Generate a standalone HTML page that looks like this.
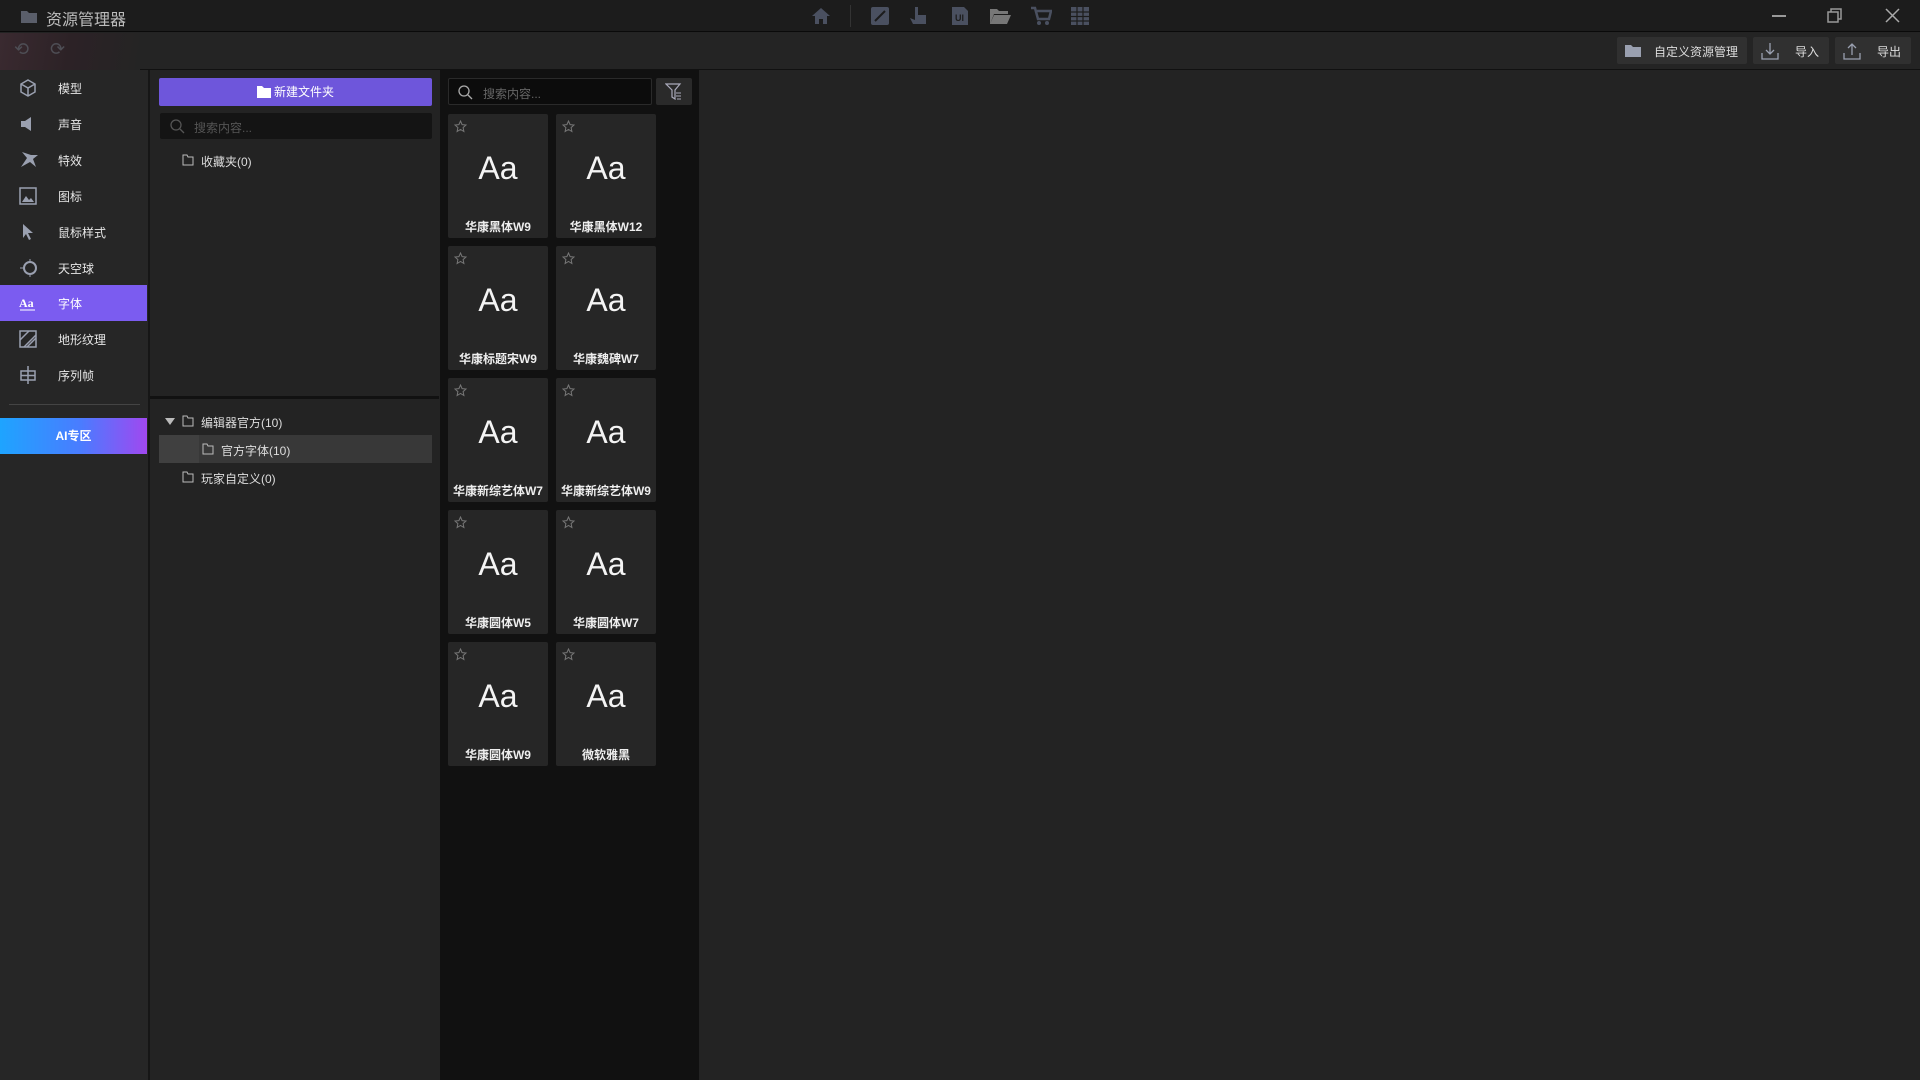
<!DOCTYPE html>
<html><head><meta charset="utf-8"><style>
*{margin:0;padding:0;box-sizing:border-box}
body{width:1920px;height:1080px;background:#232323;font-family:"Liberation Sans","Noto Sans CJK SC",sans-serif;color:#ddd;position:relative;overflow:hidden;font-size:12px}
.a{position:absolute}
#title{left:0;top:0;width:1920px;height:32px;background:#1c1c1c;border-bottom:1px solid #0a0a0a}
#tool{left:0;top:33px;width:1920px;height:37px;background:#242424;border-bottom:1px solid #111}
#side{left:0;top:70px;width:150px;height:1010px;background:#262626;border-right:2px solid #161616}
.si{position:absolute;left:0;width:147px;height:36px;display:flex;align-items:center}
.si svg{position:absolute;left:19px}
.si span{position:absolute;left:58px;font-size:12px;color:#e6e6e6}
#fold{left:150px;top:70px;width:289px;height:1010px;background:#232323}
#cards{left:440px;top:70px;width:259px;height:1010px;background:#111}
.card{position:absolute;width:100px;height:124px;background:#262626;border-radius:2px}
.card .aa{position:absolute;left:0;width:100px;top:36px;text-align:center;font-size:32px;color:#f4f4f4}
.card .lb{position:absolute;left:0;width:100px;top:104px;text-align:center;font-size:12px;font-weight:bold;color:#eee;white-space:nowrap}
.card svg{position:absolute;left:6px;top:6px}
.btn{position:absolute;top:37px;height:27px;background:#303030;border-radius:2px;color:#ddd;font-size:12px}
.ti{position:absolute;top:6px}
</style></head><body>
<div id="title" class="a">
<svg class="a" style="left:21px;top:10px" width="16" height="13"><path d="M0 1h6l2 2h8v10H0z" fill="#5a5e6a"/></svg>
<div class="a" style="left:46px;top:6px;font-size:16px;color:#bdbdbd">资源管理器</div>
<svg class="ti" style="left:811px" width="20" height="20"><path d="M10 2L1 10h3v8h4v-5h4v5h4v-8h3z" fill="#4a5060"/></svg>
<div class="a" style="left:850px;top:5px;width:1px;height:22px;background:#333"></div>
<svg class="ti" style="left:870px" width="20" height="20"><rect x="1" y="1" width="18" height="18" rx="2" fill="#4a5060"/><path d="M5 15l10-10" stroke="#1c1c1c" stroke-width="2"/></svg>
<svg class="ti" style="left:909px" width="20" height="20"><path d="M6 1h3v8h8v9H4l-3-6 5 2z" fill="#4a5060"/></svg>
<svg class="ti" style="left:950px" width="20" height="20"><path d="M2 1h12l4 4v14H2z" fill="#4a5060"/><text x="5" y="15" font-size="9" fill="#1c1c1c" font-family="Liberation Sans" font-weight="bold">UI</text></svg>
<svg class="ti" style="left:989px" width="22" height="20"><path d="M1 3h7l2 2h9v3H5l-4 10z M5 9h17l-4 9H1z" fill="#777"/></svg>
<svg class="ti" style="left:1030px" width="22" height="20"><path d="M1 2h4l3 11h11l2-8H7" fill="none" stroke="#4a5060" stroke-width="2.5"/><circle cx="9" cy="17" r="2" fill="#4a5060"/><circle cx="17" cy="17" r="2" fill="#4a5060"/></svg>
<svg class="ti" style="left:1070px" width="20" height="20"><rect x="1" y="1" width="18" height="18" fill="#4a5060"/><path d="M1 6h18M1 10.5h18M1 15h18M7 1v18M13 1v18" stroke="#1c1c1c" stroke-width="1.2"/></svg>
<div class="a" style="left:1772px;top:15px;width:14px;height:1.5px;background:#999"></div>
<svg class="a" style="left:1827px;top:8px" width="15" height="15"><rect x="1" y="4" width="10" height="10" fill="none" stroke="#999" stroke-width="1.5"/><path d="M4 4V1h10v10h-3" fill="none" stroke="#999" stroke-width="1.5"/></svg>
<svg class="a" style="left:1885px;top:8px" width="15" height="15"><path d="M1 1l13 13M14 1L1 14" stroke="#aaa" stroke-width="1.5"/></svg>
</div>
<div id="tool" class="a">
<div class="a" style="left:0;top:0;width:140px;height:37px;background:linear-gradient(100deg,#3a2a30,#2c2226 50%,#242424)"></div>
<div class="a" style="left:14px;top:6px;color:#4e4e55;font-size:18px">⟲</div>
<div class="a" style="left:50px;top:6px;color:#4e4e55;font-size:18px">⟳</div>
</div>
<div class="btn" style="left:1617px;width:130px"><svg class="a" style="left:8px;top:7px" width="16" height="13"><path d="M0 1h6l2 2h8v10H0z" fill="#9aa0b0"/></svg><span class="a" style="left:37px;top:6px">自定义资源管理</span></div>
<div class="btn" style="left:1753px;width:76px"><svg class="a" style="left:8px;top:5px" width="18" height="18"><path d="M9 1v11M5 8l4 4 4-4M1 11v6h16v-6" fill="none" stroke="#9aa0b0" stroke-width="1.3"/></svg><span class="a" style="left:42px;top:6px">导入</span></div>
<div class="btn" style="left:1835px;width:76px"><svg class="a" style="left:8px;top:5px" width="18" height="18"><path d="M9 13V2M5 6l4-4 4 4M1 11v6h16v-6" fill="none" stroke="#9aa0b0" stroke-width="1.3"/></svg><span class="a" style="left:42px;top:6px">导出</span></div>

<div id="side" class="a">
<div class="si" style="top:0px"><svg width="18" height="18"><path d="M9 1l7 4v8l-7 4-7-4V5z M2 5l7 4 7-4M9 9v8" fill="none" stroke="#9aa0b0" stroke-width="1.5"/></svg><span>模型</span></div>
<div class="si" style="top:36px"><svg width="18" height="18"><path d="M2 6h4l6-4v14l-6-4H2z" fill="#9aa0b0"/></svg><span>声音</span></div>
<div class="si" style="top:72px"><svg width="20" height="18"><path d="M3 1l5 6-6 9 9-5 6 5-3-8 5-4h-7z" fill="#9aa0b0"/></svg><span>特效</span></div>
<div class="si" style="top:108px"><svg width="18" height="18"><rect x="1" y="1" width="16" height="16" fill="none" stroke="#9aa0b0" stroke-width="1.5"/><path d="M3 15l4-6 3 4 2-2 3 4z" fill="#9aa0b0"/></svg><span>图标</span></div>
<div class="si" style="top:144px"><svg width="18" height="18"><path d="M4 1l10 9h-5l3 6-2 1-3-6-3 4z" fill="#9aa0b0"/></svg><span>鼠标样式</span></div>
<div class="si" style="top:180px"><svg width="20" height="18"><circle cx="11" cy="9" r="6" fill="none" stroke="#9aa0b0" stroke-width="2"/><path d="M1 9h3M11 0v2M11 16v2" stroke="#9aa0b0"/></svg><span>天空球</span></div>
<div class="si" style="top:215px;background:#7b5cf0"><svg width="18" height="18"><text x="0" y="13" font-size="12" font-weight="bold" fill="#fff" font-family="Liberation Serif">Aa</text><path d="M1 16h15" stroke="#fff"/></svg><span style="color:#fff">字体</span></div>
<div class="si" style="top:251px"><svg width="18" height="18"><rect x="1" y="1" width="16" height="16" fill="none" stroke="#9aa0b0" stroke-width="1.5"/><path d="M1 10l9-9M5 17L17 5M8 17l9-9" stroke="#9aa0b0" stroke-width="1.5"/></svg><span>地形纹理</span></div>
<div class="si" style="top:287px"><svg width="18" height="18"><path d="M9 0v18M2 5h14v9H2zM2 9.5h14" fill="none" stroke="#9aa0b0" stroke-width="1.5"/></svg><span>序列帧</span></div>
<div class="a" style="left:9px;top:334px;width:131px;height:1px;background:#444"></div>
<div class="a" style="left:0;top:348px;width:147px;height:36px;background:linear-gradient(90deg,#1ea4ff,#4a7cff 55%,#a048f0);color:#fff;font-weight:bold;font-size:12px;text-align:center;line-height:36px">AI专区</div>
</div>

<div id="fold" class="a">
<div class="a" style="left:9px;top:8px;width:273px;height:28px;background:#6e56db;border-radius:2px;color:#fff;font-size:12px;text-align:center;line-height:28px"><svg style="vertical-align:-2px;margin-right:3px" width="14" height="13"><path d="M0 1h5l2 2h7v10H0z" fill="#fff"/></svg>新建文件夹</div>
<div class="a" style="left:10px;top:43px;width:272px;height:26px;background:#141414;border-radius:2px"><svg class="a" style="left:10px;top:6px" width="15" height="15"><circle cx="6" cy="6" r="5" fill="none" stroke="#555" stroke-width="1.3"/><path d="M10 10l4 4" stroke="#555" stroke-width="1.3"/></svg><span class="a" style="left:34px;top:6px;color:#555">搜索内容...</span></div>
<svg class="a" style="left:32px;top:84px" width="12" height="12"><path d="M1 1h4l1 2h5v8H1z" fill="none" stroke="#bbb"/></svg>
<span class="a" style="left:51px;top:83px;color:#ddd">收藏夹(0)</span>
<div class="a" style="left:0;top:326px;width:289px;height:3px;background:#111"></div>
<svg class="a" style="left:15px;top:348px" width="10" height="8"><path d="M0 0h10L5 7z" fill="#bbb"/></svg>
<svg class="a" style="left:32px;top:345px" width="12" height="12"><path d="M1 1h4l1 2h5v8H1z" fill="none" stroke="#bbb"/></svg>
<span class="a" style="left:51px;top:344px;color:#ddd">编辑器官方(10)</span>
<div class="a" style="left:9px;top:365px;width:273px;height:28px;background:#383838"></div>
<div class="a" style="left:9px;top:365px;width:40px;height:28px;background:#404040"></div>
<svg class="a" style="left:52px;top:373px" width="12" height="12"><path d="M1 1h4l1 2h5v8H1z" fill="none" stroke="#bbb"/></svg>
<span class="a" style="left:71px;top:372px;color:#ddd">官方字体(10)</span>
<svg class="a" style="left:32px;top:401px" width="12" height="12"><path d="M1 1h4l1 2h5v8H1z" fill="none" stroke="#bbb"/></svg>
<span class="a" style="left:51px;top:400px;color:#ddd">玩家自定义(0)</span>
</div>

<div id="cards" class="a">
<div class="a" style="left:8px;top:8px;width:204px;height:27px;background:#0c0c0c;border:1px solid #2a2a2a;border-radius:2px"><svg class="a" style="left:9px;top:6px" width="15" height="15"><circle cx="6" cy="6" r="5" fill="none" stroke="#aaa" stroke-width="1.3"/><path d="M10 10l4 4" stroke="#aaa" stroke-width="1.3"/></svg><span class="a" style="left:34px;top:6px;color:#666">搜索内容...</span></div>
<div class="a" style="left:216px;top:8px;width:36px;height:27px;background:#2a2a2a;border-radius:2px"><svg class="a" style="left:9px;top:5px" width="18" height="17"><path d="M1 1h14l-5 6v9l-3-2V7z" fill="none" stroke="#aab" stroke-width="1.2"/><path d="M11 10h5M11 13h5M12 16h4" stroke="#aab"/></svg></div>
</div>
<div id="cl"></div>
<script>
var n=["华康黑体W9","华康黑体W12","华康标题宋W9","华康魏碑W7","华康新综艺体W7","华康新综艺体W9","华康圆体W5","华康圆体W7","华康圆体W9","微软雅黑"];
var h="";
for(var i=0;i<10;i++){var x=448+(i%2)*108,y=114+Math.floor(i/2)*132;
h+='<div class="card" style="left:'+x+'px;top:'+y+'px"><svg width="13" height="13"><path d="M6.5 1l1.6 3.6 3.9.4-2.9 2.6.8 3.9-3.4-2-3.4 2 .8-3.9L1 5l3.9-.4z" fill="none" stroke="#777" stroke-width="1"/></svg><div class="aa">Aa</div><div class="lb">'+n[i]+'</div></div>';}
document.getElementById("cl").innerHTML=h;
</script>
</body></html>
